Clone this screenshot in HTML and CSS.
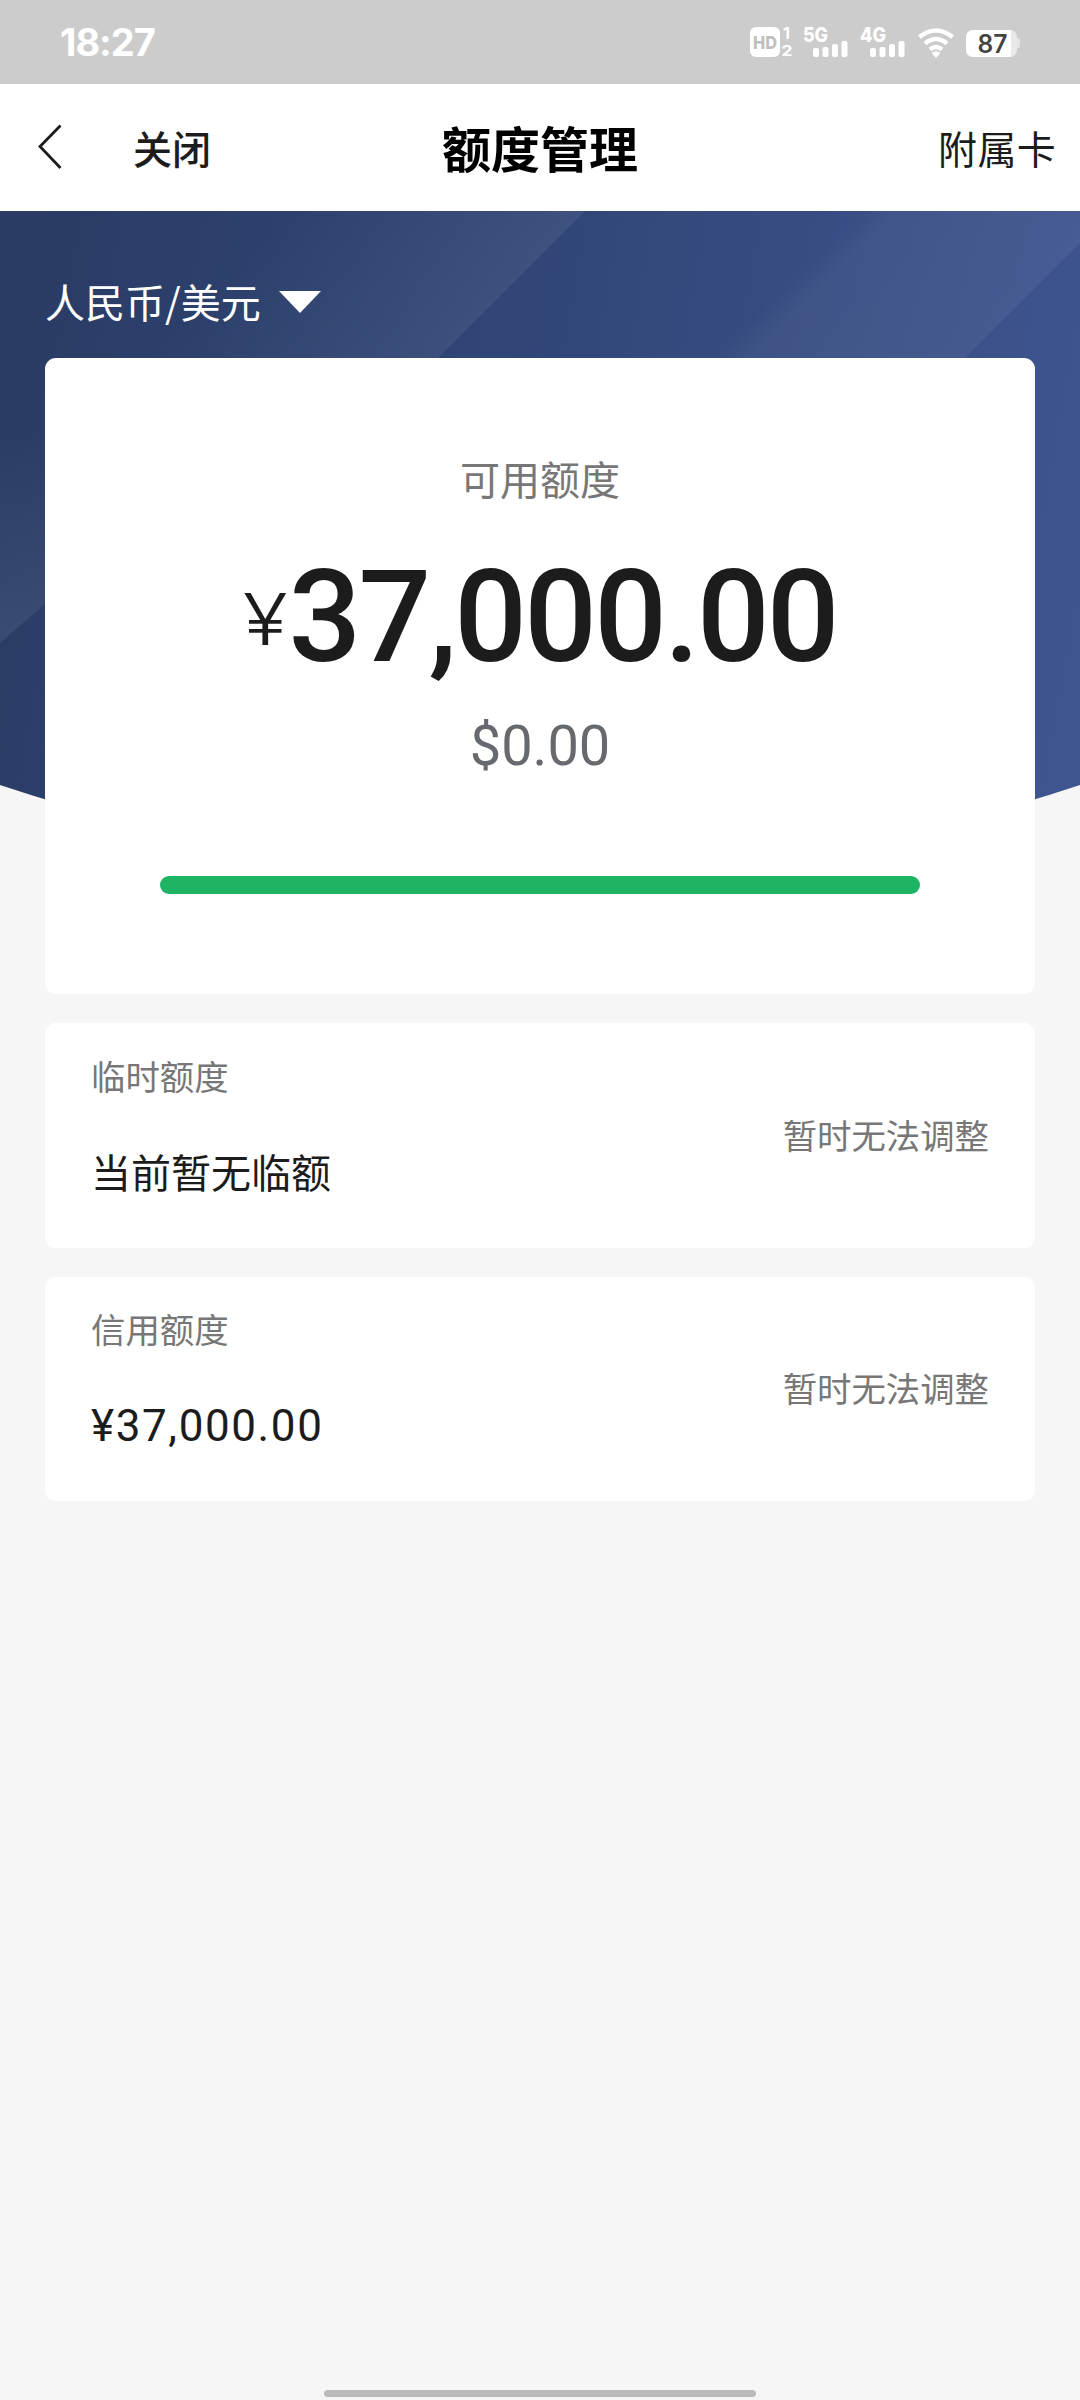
FILE: index.html
```html
<!DOCTYPE html>
<html lang="zh-CN">
<head>
<meta charset="utf-8">
<title>额度管理</title>
<link rel="stylesheet" href="styles.css">
</head>
<body>
<div class="screen">
  <header class="status">
    <span class="clock">18:27</span>
    <svg class="status-icons" width="274" height="36" viewBox="746 24 274 36" fill="#fff">
      <rect x="750" y="27" width="30" height="30" rx="6"/>
      <text x="753" y="49" font-size="18" font-weight="800" fill="#c0c0c0" textLength="24" lengthAdjust="spacingAndGlyphs">HD</text>
      <text x="783" y="39" font-size="16" font-weight="700">1</text>
      <text x="781.500" y="56" font-size="15" font-weight="700" textLength="11" lengthAdjust="spacingAndGlyphs">2</text>
      <text x="803" y="42" font-size="20" font-weight="800" textLength="25" lengthAdjust="spacingAndGlyphs">5G</text>
      <rect x="813" y="48" width="6" height="9" rx="2"/><rect x="822.500" y="47" width="6" height="10" rx="2"/><rect x="832" y="44" width="6" height="13" rx="2"/><rect x="841.500" y="41" width="6" height="16" rx="2"/>
      <text x="860" y="42" font-size="20" font-weight="800" textLength="26" lengthAdjust="spacingAndGlyphs">4G</text>
      <rect x="870" y="48" width="6" height="9" rx="2"/><rect x="879.500" y="47" width="6" height="10" rx="2"/><rect x="889" y="44" width="6" height="13" rx="2"/><rect x="898.500" y="41" width="6" height="16" rx="2"/>
      <g fill="none" stroke="#fff" stroke-width="4.500">
        <path d="M919.500 37Q936 24 952.500 37"/><path d="M925 43.500Q936 34.500 947 43.500"/><path d="M930 49.500Q936 44.500 942 49.500"/>
      </g>
      <path d="M931.500 53Q936 49.500 940.500 53L936 58Z"/>
      <path d="M1016 38h2a2 2 0 0 1 2 2v6a2 2 0 0 1-2 2h-2z" fill="#e4e4e4"/>
      <rect x="966" y="30" width="51" height="27" rx="7" fill="#e9e9e9"/>
      <path d="M973 30h38v27h-38a7 7 0 0 1-7-7V37a7 7 0 0 1 7-7z"/>
      <text x="977.500" y="53" font-size="25" font-weight="600" fill="#444" textLength="30" lengthAdjust="spacingAndGlyphs">87</text>
    </svg>
  </header>
  <nav class="navbar">
    <div class="nav-left">
      <svg class="back" width="24" height="46" viewBox="0 0 24 46"><path d="M22.500 1.500L2 22.500L22.500 44" fill="none" stroke="#1c1c1c" stroke-width="2.800"/></svg>
      <span>关闭</span>
    </div>
    <h1>额度管理</h1>
    <span class="nav-right">附属卡</span>
  </nav>
  <main class="content">
    <svg class="hero" width="1080" height="640" viewBox="0 211 1080 640">
      <defs>
        <clipPath id="arc"><path d="M0 211H1080V785Q810 875 540 875T0 785Z"/></clipPath>
        <linearGradient id="base" x1="0" y1="400" x2="1080" y2="600" gradientUnits="userSpaceOnUse"><stop offset="0" stop-color="#2a3c65"/><stop offset=".5" stop-color="#324779"/><stop offset="1" stop-color="#3f5590"/></linearGradient>
        <linearGradient id="band1" x1="250" y1="250" x2="398" y2="398" gradientUnits="userSpaceOnUse"><stop offset="0" stop-color="#fff" stop-opacity="0"/><stop offset="1" stop-color="#fff" stop-opacity=".06"/></linearGradient>
        <linearGradient id="band2" x1="535" y1="535" x2="661" y2="661" gradientUnits="userSpaceOnUse"><stop offset="0" stop-color="#fff" stop-opacity="0"/><stop offset=".15" stop-color="#fff" stop-opacity=".04"/><stop offset="1" stop-color="#fff" stop-opacity=".05"/></linearGradient>
        <linearGradient id="band3" x1="0" y1="430" x2="0" y2="640" gradientUnits="userSpaceOnUse"><stop offset="0" stop-color="#fff" stop-opacity="0"/><stop offset="1" stop-color="#fff" stop-opacity=".075"/></linearGradient>
      </defs>
      <g clip-path="url(#arc)">
        <path d="M0 211H1080V851H0Z" fill="url(#base)"/>
        <path d="M280 211H585L438 358H130Z" fill="url(#band1)"/>
        <path d="M850 211H1080V243L965 358H700Z" fill="url(#band2)"/>
        <path d="M0 430H60V591L0 643Z" fill="url(#band3)"/>
      </g>
    </svg>
    <div class="currency"><span>人民币/美元</span><svg width="42" height="22" viewBox="0 0 42 22"><path d="M0 0H42L21 22Z" fill="#fff"/></svg></div>
    <section class="card summary">
      <div class="label">可用额度</div>
      <div class="amount"><span class="yen">¥</span><span class="digits">37,000.00</span></div>
      <div class="usd">$0.00</div>
      <div class="bar"></div>
    </section>
    <section class="card row">
      <div class="info"><span class="caption">临时额度</span><span class="value">当前暂无临额</span></div>
      <span class="note">暂时无法调整</span>
    </section>
    <section class="card row last">
      <div class="info"><span class="caption">信用额度</span><span class="value money">¥37,000.00</span></div>
      <span class="note">暂时无法调整</span>
    </section>
  </main>
  <div class="home"></div>
</div>
</body>
</html>
```

FILE: styles.css
```css
* { box-sizing: border-box; }
body { margin: 0; background: #f6f6f6; font-family: Roboto, "Noto Sans CJK SC", sans-serif; color: #1c1c1c; }
.screen { width: 1080px; height: 2400px; display: flex; flex-direction: column; background: #f6f6f6; }
.status { height: 84px; background: #ccc; display: flex; align-items: center; justify-content: space-between; padding: 0 60px; font-family: Inter, sans-serif; }
.clock { color: #fff; font-size: 38px; font-weight: 700; letter-spacing: -1px; }
.status-icons { display: block; }
.navbar { height: 127px; background: #fff; display: grid; grid-template-columns: 1fr auto 1fr; align-items: center; padding: 0 24px 2px; font-size: 39px; line-height: 60px; font-family: "Noto Sans CJK SC", sans-serif; font-weight: 500; }
.nav-left { display: flex; align-items: center; gap: 71px; padding-left: 14px; }
.back { display: block; }
.navbar h1 { margin: 0; font-size: 49px; font-weight: 700; line-height: 60px; color: #000; }
.nav-right { justify-self: end; font-weight: 400; letter-spacing: .3px; }
.content { flex: 1; position: relative; padding: 0 45px; display: flex; flex-direction: column; }
.hero { position: absolute; left: 0; top: 0; }
.currency { position: relative; height: 147px; padding: 32px 0 0; display: flex; align-items: center; gap: 18px; color: #fff; font: 40px/60px "Noto Sans CJK SC", sans-serif; }
.currency svg { margin-top: 2px; }
.card { position: relative; background: #fff; border-radius: 11px; }
.summary { height: 636px; padding-top: 94px; display: flex; flex-direction: column; align-items: center; }
.label { font-size: 40px; line-height: 60px; color: #777; }
.amount { height: 150px; margin-top: 28px; padding-top: 2px; display: flex; align-items: baseline; line-height: 150px; }
.yen { font-family: Inter, sans-serif; font-size: 71px; font-weight: 300; line-height: 1; margin-right: 4px; transform: translateY(-16px) scaleX(1.16); }
.digits { font-size: 128px; font-weight: 500; letter-spacing: -2.800px; margin-right: -3px; }
.usd { margin-top: 21px; font-size: 56px; line-height: 70px; color: #66696e; }
.bar { width: 760px; height: 18px; margin-top: 95px; border-radius: 9px; background: #1eb464; }
.row { height: 225px; margin-top: 29px; padding: 2px 46px 0; display: flex; justify-content: space-between; align-items: center; }
.row.last { height: 224px; }
.info { display: flex; flex-direction: column; align-self: flex-start; padding-top: 28px; gap: 42px; }
.caption, .note { font-size: 34.400px; line-height: 50px; color: #777; }
.value { font-size: 40px; line-height: 60px; }
.last .info { gap: 40px; padding-top: 27px; }
.money { font-size: 44px; letter-spacing: 1.600px; }
.home { align-self: center; width: 432px; height: 7px; border-radius: 4px; background: #bbb; margin-bottom: 3px; }
```
